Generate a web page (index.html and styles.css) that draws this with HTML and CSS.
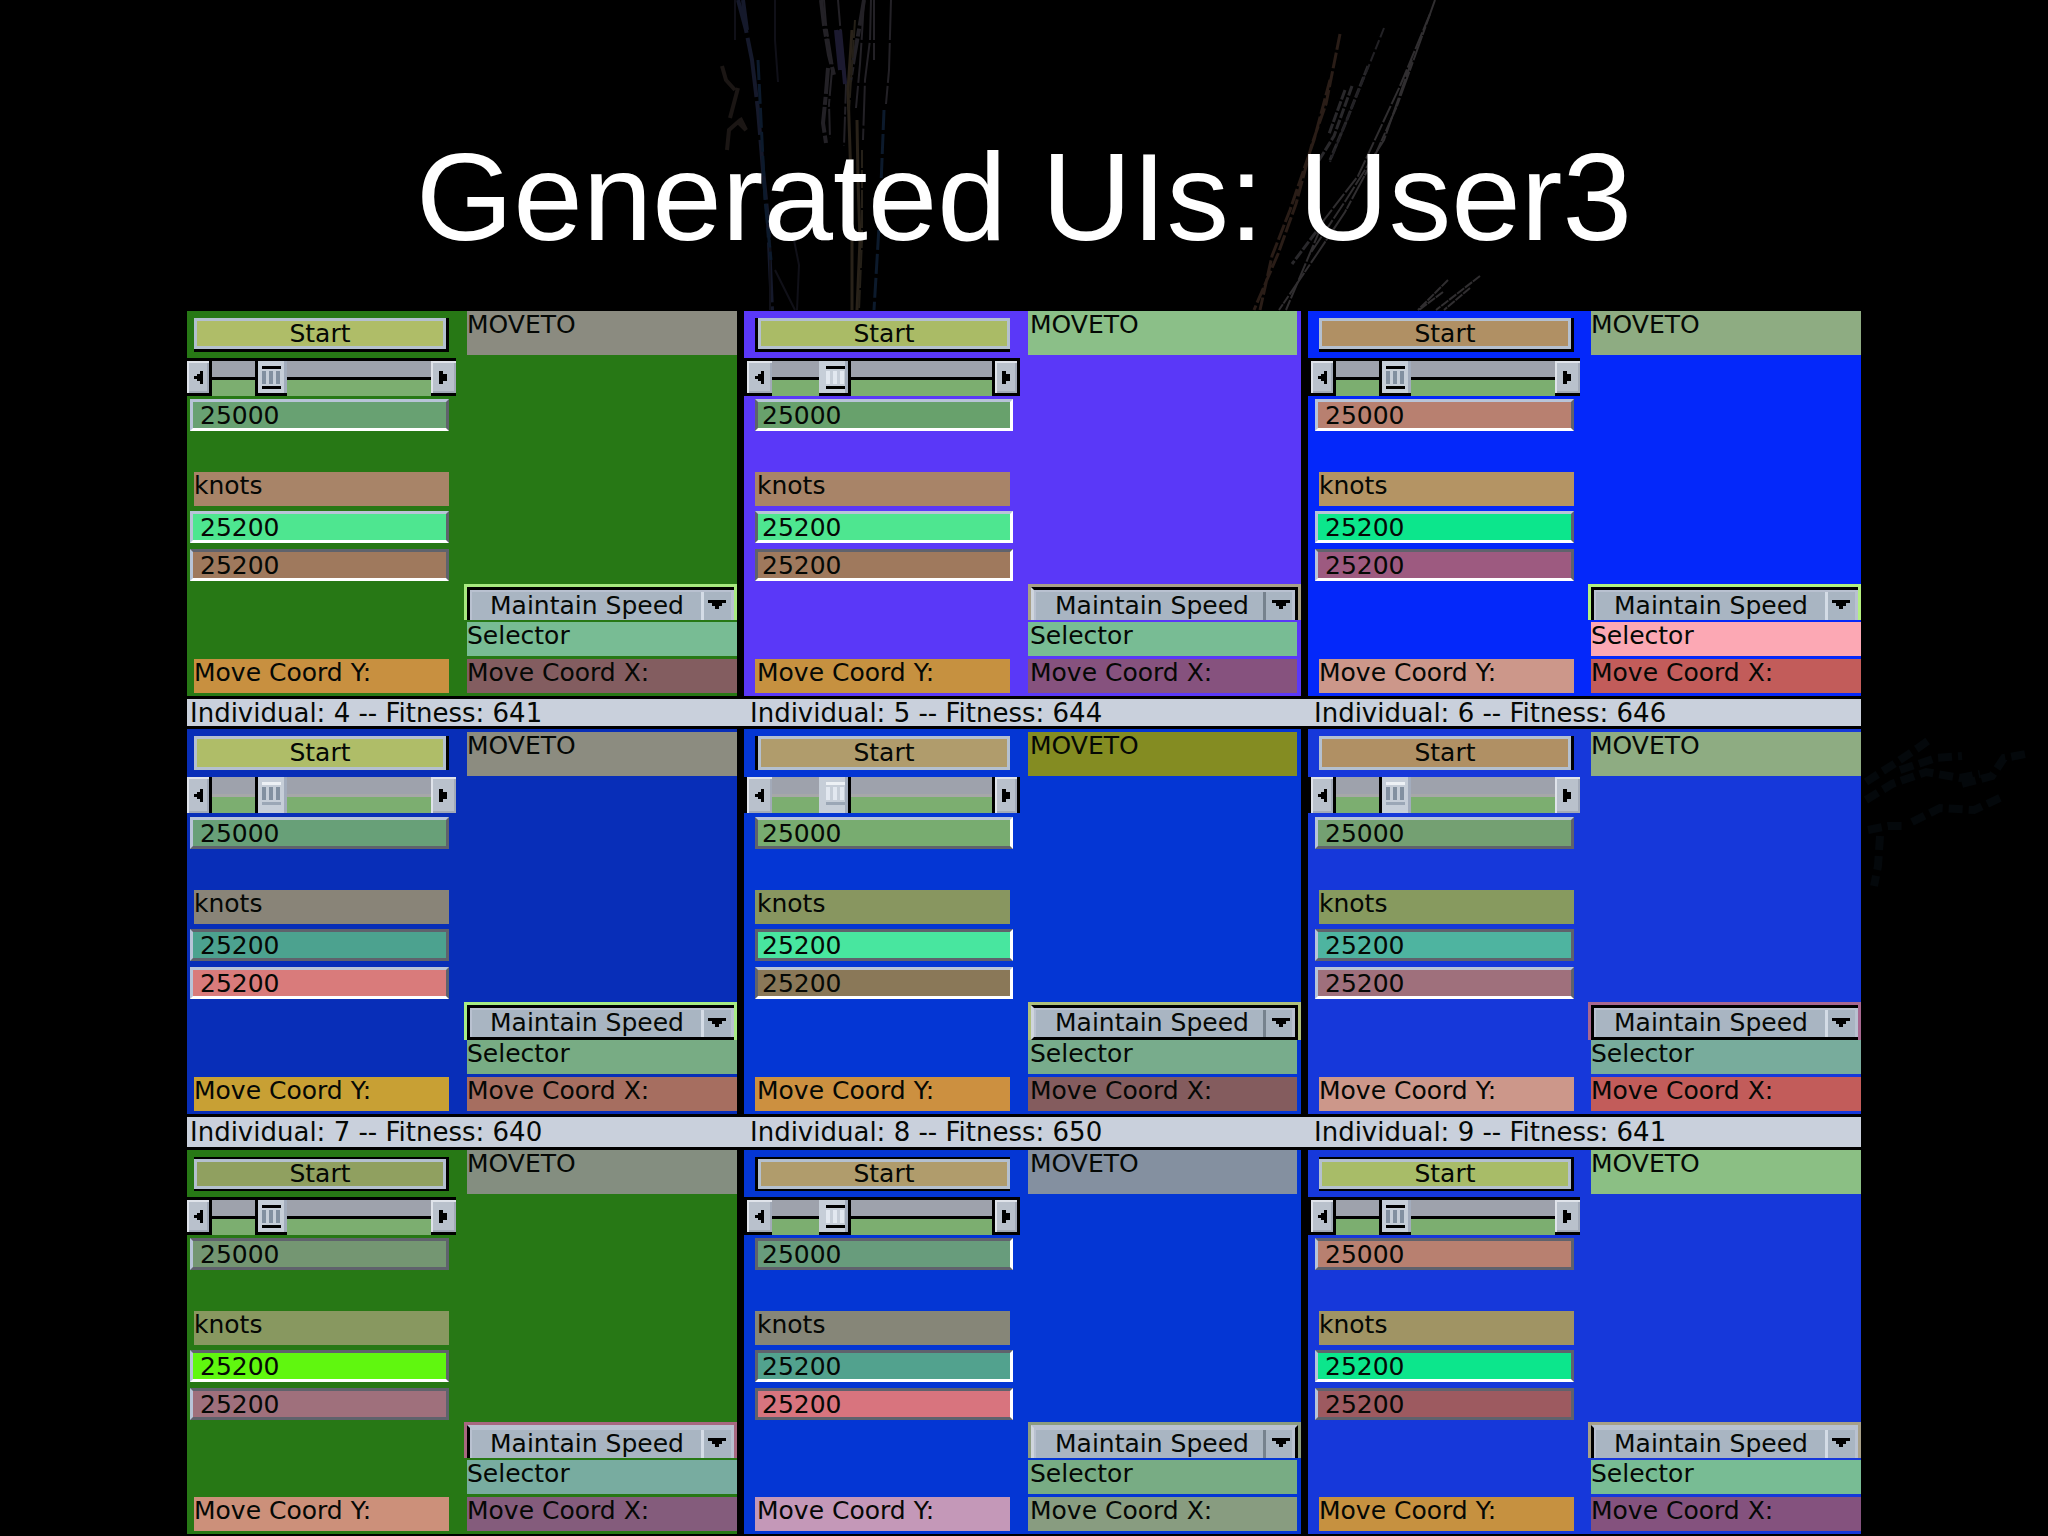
FILE: index.html
```
<!DOCTYPE html>
<html lang="en">

<head>
    <meta charset="UTF-8">
    <meta name="viewport" content="width=device-width, initial-scale=1.0">
    <title>Generated UIs: User3</title>

    <link rel="stylesheet" href="styles.css">
</head>

<body>
    <!-- shared arrows -->
    <svg class="symbols" aria-hidden="true">
        <symbol id="arrow-left" viewBox="0 0 9 13">
            <path d="M6 0h3v13H6v-3H3V8H0V5h3V3h3z" />
        </symbol>
        <symbol id="arrow-right" viewBox="0 0 9 13">
            <path d="M0 0h4v3h4v7H4v3H0z" />
        </symbol>
        <symbol id="arrow-down" viewBox="0 0 18 9">
            <path d="M0 0h18v3h-4v3h-3v3H7V6H4V3H0z" />
        </symbol>
    </svg>

    <!-- faint light trails behind the slide -->
    <svg class="trails" viewBox="0 0 2048 1536" preserveAspectRatio="xMidYMin slice" aria-hidden="true">
        <g fill="none" stroke-width="2">
            <g stroke="#15192b">
                <path stroke-width="4" stroke-dasharray="34 5 60 4" d="M738 0l8 30 6 30 6 50 5 60 5 50 4 90M743 0l4 30" />
                <path stroke="#101018" d="M735 0v40M775 0v40l3 42M793 235l6 30-2 45M770 240v70M775 270l20 40" />
                <path stroke="#0c1a2c" stroke-width="3" stroke-dasharray="20 4" d="M758 60l3 60 4 80 6 60M884 110l-4 100-6 100" />
            </g>
            <g stroke="#232126">
                <path stroke-width="4" stroke-dasharray="26 3 8 2" d="M821 0l3 25 5 30 5 20M828 68l-2 25-3 30 3 20M864 0l-4 24-6 34-4 24" />
                <path stroke-dasharray="26 3 8 2" d="M824 0l2 24 8 50M832 70l-3 34 1 34M838 0l3 36 5 50-2 60" />
                <path stroke-dasharray="40 3" d="M871 0l-1 40-5 40-2 60M864 0l-2 34-2 30-4 44M891 0l-2 70-3 34M874 0v60" />
                <path stroke="#1c1a30" stroke-width="4" d="M840 30l5 54M836 30l4 40" />
            </g>
            <g stroke="#292219">
                <path stroke-width="3" d="M852 30l-4 60 2 60 2 70v90M857 120l1 60 2 60-3 70" />
                <path stroke="#252018" stroke-dasharray="18 2" d="M855 20l-6 90M862 150v90l-3 70" />
            </g>
            <path stroke="#1b1614" stroke-width="4" d="M722 66l4 14 9 10M738 88l-8 30M740 118l6 12-8-8-9 8-2 20" />
            <g stroke="#302e30">
                <path stroke-dasharray="26 2 9 1" d="M1435 0l-20 56-18 50-24 54-28 52-28 42-38 56" />
                <path stroke-dasharray="18 2" d="M1430 14l-30 72-42 90-34 44-38 90M1412 60l-28 80-38 60-36 54" />
                <path stroke="#29282b" stroke-width="3" stroke-dasharray="10 2" d="M1368 66l-22 56-16 38M1352 86l-18 50-16 26M1345 90l-16 44M1316 232l-24 32" />
                <path stroke="#222125" stroke-dasharray="10 3" d="M1384 28l-16 40-18 44-20 50" />
                <path stroke="#2a1d17" stroke-width="3" stroke-dasharray="16 3" d="M1340 34l-6 30-8 40-14 40-16 60-18 50-24 56M1330 80l-16 60-24 70-18 46-12 54" />
                <path stroke-dasharray="9 1" d="M1448 280l-30 30M1443 292l-24 18M1480 276l-44 34M1470 288l-26 22" />
            </g>
            <g stroke="#04080b" stroke-width="8" stroke-dasharray="14 6">
                <path d="M1866 782l28-18 24-16 14-10M1900 770l36-12 26-2" />
                <path d="M1866 800l26-16 34-12 34 6 20-4M1962 784l30-8 12-18 22-4M1912 822l28-14 34 2 30-14" />
                <path d="M1868 830l20-4 16 0M1880 836l-2 30-4 20" />
            </g>
        </g>
    </svg>

    <main class="slide">
        <h1>Generated UIs: User3</h1>

        <div class="board">
            <section class="row row-first">
                <div class="panel side-left individual-1">
                    <div class="controls">
                        <button class="start" type="button">Start</button>
                        <div class="slider">
                            <button type="button" aria-label="Decrease"><svg><use href="#arrow-left" /></svg></button>
                            <input type="range" min="0" max="100" value="23" aria-label="Speed">
                            <button type="button" aria-label="Increase"><svg><use href="#arrow-right" /></svg></button>
                        </div>
                        <input class="field speed" id="speed-1" type="text" value="25000">
                        <label class="tag units" for="speed-1">knots</label>
                        <input class="field coord-a" type="text" value="25200" id="y-1">
                        <input class="field coord-b top-dark" type="text" value="25200" id="x-1">
                        <label class="tag move-y" for="y-1">Move Coord Y:</label>
                    </div>
                    <div class="options">
                        <div class="tag moveto">MOVETO</div>
                        <div class="combo">
                            <select id="mode-1"><option>Maintain Speed</option></select>
                            <svg><use href="#arrow-down" /></svg>
                        </div>
                        <label class="tag selector" for="mode-1">Selector</label>
                        <label class="tag move-x" for="x-1">Move Coord X:</label>
                    </div>
                </div>

                <div class="panel side-right individual-2">
                    <div class="controls">
                        <button class="start" type="button">Start</button>
                        <div class="slider">
                            <button type="button" aria-label="Decrease"><svg><use href="#arrow-left" /></svg></button>
                            <input type="range" min="0" max="100" value="25" aria-label="Speed">
                            <button type="button" aria-label="Increase"><svg><use href="#arrow-right" /></svg></button>
                        </div>
                        <input class="field speed" id="speed-2" type="text" value="25000">
                        <label class="tag units" for="speed-2">knots</label>
                        <input class="field coord-a" type="text" value="25200" id="y-2">
                        <input class="field coord-b top-dark" type="text" value="25200" id="x-2">
                        <label class="tag move-y" for="y-2">Move Coord Y:</label>
                    </div>
                    <div class="options">
                        <div class="tag moveto">MOVETO</div>
                        <div class="combo">
                            <select id="mode-2"><option>Maintain Speed</option></select>
                            <svg><use href="#arrow-down" /></svg>
                        </div>
                        <label class="tag selector" for="mode-2">Selector</label>
                        <label class="tag move-x" for="x-2">Move Coord X:</label>
                    </div>
                </div>

                <div class="panel side-left last individual-3">
                    <div class="controls">
                        <button class="start" type="button">Start</button>
                        <div class="slider">
                            <button type="button" aria-label="Decrease"><svg><use href="#arrow-left" /></svg></button>
                            <input type="range" min="0" max="100" value="23" aria-label="Speed">
                            <button type="button" aria-label="Increase"><svg><use href="#arrow-right" /></svg></button>
                        </div>
                        <input class="field speed" id="speed-3" type="text" value="25000">
                        <label class="tag units" for="speed-3">knots</label>
                        <input class="field coord-a" type="text" value="25200" id="y-3">
                        <input class="field coord-b top-dark" type="text" value="25200" id="x-3">
                        <label class="tag move-y" for="y-3">Move Coord Y:</label>
                    </div>
                    <div class="options">
                        <div class="tag moveto">MOVETO</div>
                        <div class="combo">
                            <select id="mode-3"><option>Maintain Speed</option></select>
                            <svg><use href="#arrow-down" /></svg>
                        </div>
                        <label class="tag selector" for="mode-3">Selector</label>
                        <label class="tag move-x" for="x-3">Move Coord X:</label>
                    </div>
                </div>
            </section>

            <div class="captions">
                <p>Individual: 4 -- Fitness: 641</p>
                <p>Individual: 5 -- Fitness: 644</p>
                <p>Individual: 6 -- Fitness: 646</p>
            </div>

            <section class="row row-middle">
                <div class="panel side-left individual-4">
                    <div class="controls">
                        <button class="start" type="button">Start</button>
                        <div class="slider">
                            <button type="button" aria-label="Decrease"><svg><use href="#arrow-left" /></svg></button>
                            <input type="range" min="0" max="100" value="23" aria-label="Speed">
                            <button type="button" aria-label="Increase"><svg><use href="#arrow-right" /></svg></button>
                        </div>
                        <input class="field speed bottom-dark" id="speed-4" type="text" value="25000">
                        <label class="tag units" for="speed-4">knots</label>
                        <input class="field coord-a top-dark bottom-dark" type="text" value="25200" id="y-4">
                        <input class="field coord-b" type="text" value="25200" id="x-4">
                        <label class="tag move-y" for="y-4">Move Coord Y:</label>
                    </div>
                    <div class="options">
                        <div class="tag moveto">MOVETO</div>
                        <div class="combo">
                            <select id="mode-4"><option>Maintain Speed</option></select>
                            <svg><use href="#arrow-down" /></svg>
                        </div>
                        <label class="tag selector" for="mode-4">Selector</label>
                        <label class="tag move-x" for="x-4">Move Coord X:</label>
                    </div>
                </div>

                <div class="panel side-right individual-5">
                    <div class="controls">
                        <button class="start" type="button">Start</button>
                        <div class="slider">
                            <button type="button" aria-label="Decrease"><svg><use href="#arrow-left" /></svg></button>
                            <input type="range" min="0" max="100" value="25" aria-label="Speed">
                            <button type="button" aria-label="Increase"><svg><use href="#arrow-right" /></svg></button>
                        </div>
                        <input class="field speed bottom-dark" id="speed-5" type="text" value="25000">
                        <label class="tag units" for="speed-5">knots</label>
                        <input class="field coord-a top-dark bottom-dark" type="text" value="25200" id="y-5">
                        <input class="field coord-b" type="text" value="25200" id="x-5">
                        <label class="tag move-y" for="y-5">Move Coord Y:</label>
                    </div>
                    <div class="options">
                        <div class="tag moveto">MOVETO</div>
                        <div class="combo">
                            <select id="mode-5"><option>Maintain Speed</option></select>
                            <svg><use href="#arrow-down" /></svg>
                        </div>
                        <label class="tag selector" for="mode-5">Selector</label>
                        <label class="tag move-x" for="x-5">Move Coord X:</label>
                    </div>
                </div>

                <div class="panel side-left last individual-6">
                    <div class="controls">
                        <button class="start" type="button">Start</button>
                        <div class="slider">
                            <button type="button" aria-label="Decrease"><svg><use href="#arrow-left" /></svg></button>
                            <input type="range" min="0" max="100" value="23" aria-label="Speed">
                            <button type="button" aria-label="Increase"><svg><use href="#arrow-right" /></svg></button>
                        </div>
                        <input class="field speed bottom-dark" id="speed-6" type="text" value="25000">
                        <label class="tag units" for="speed-6">knots</label>
                        <input class="field coord-a top-dark bottom-dark" type="text" value="25200" id="y-6">
                        <input class="field coord-b" type="text" value="25200" id="x-6">
                        <label class="tag move-y" for="y-6">Move Coord Y:</label>
                    </div>
                    <div class="options">
                        <div class="tag moveto">MOVETO</div>
                        <div class="combo">
                            <select id="mode-6"><option>Maintain Speed</option></select>
                            <svg><use href="#arrow-down" /></svg>
                        </div>
                        <label class="tag selector" for="mode-6">Selector</label>
                        <label class="tag move-x" for="x-6">Move Coord X:</label>
                    </div>
                </div>
            </section>

            <div class="captions tall">
                <p>Individual: 7 -- Fitness: 640</p>
                <p>Individual: 8 -- Fitness: 650</p>
                <p>Individual: 9 -- Fitness: 641</p>
            </div>

            <section class="row row-last">
                <div class="panel side-left individual-7">
                    <div class="controls">
                        <button class="start" type="button">Start</button>
                        <div class="slider">
                            <button type="button" aria-label="Decrease"><svg><use href="#arrow-left" /></svg></button>
                            <input type="range" min="0" max="100" value="23" aria-label="Speed">
                            <button type="button" aria-label="Increase"><svg><use href="#arrow-right" /></svg></button>
                        </div>
                        <input class="field speed top-dark bottom-dark" id="speed-7" type="text" value="25000">
                        <label class="tag units" for="speed-7">knots</label>
                        <input class="field coord-a top-dark" type="text" value="25200" id="y-7">
                        <input class="field coord-b top-dark bottom-dark" type="text" value="25200" id="x-7">
                        <label class="tag move-y" for="y-7">Move Coord Y:</label>
                    </div>
                    <div class="options">
                        <div class="tag moveto">MOVETO</div>
                        <div class="combo">
                            <select id="mode-7"><option>Maintain Speed</option></select>
                            <svg><use href="#arrow-down" /></svg>
                        </div>
                        <label class="tag selector" for="mode-7">Selector</label>
                        <label class="tag move-x" for="x-7">Move Coord X:</label>
                    </div>
                </div>

                <div class="panel side-right individual-8">
                    <div class="controls">
                        <button class="start" type="button">Start</button>
                        <div class="slider">
                            <button type="button" aria-label="Decrease"><svg><use href="#arrow-left" /></svg></button>
                            <input type="range" min="0" max="100" value="25" aria-label="Speed">
                            <button type="button" aria-label="Increase"><svg><use href="#arrow-right" /></svg></button>
                        </div>
                        <input class="field speed top-dark bottom-dark" id="speed-8" type="text" value="25000">
                        <label class="tag units" for="speed-8">knots</label>
                        <input class="field coord-a top-dark" type="text" value="25200" id="y-8">
                        <input class="field coord-b top-dark bottom-dark" type="text" value="25200" id="x-8">
                        <label class="tag move-y" for="y-8">Move Coord Y:</label>
                    </div>
                    <div class="options">
                        <div class="tag moveto">MOVETO</div>
                        <div class="combo">
                            <select id="mode-8"><option>Maintain Speed</option></select>
                            <svg><use href="#arrow-down" /></svg>
                        </div>
                        <label class="tag selector" for="mode-8">Selector</label>
                        <label class="tag move-x" for="x-8">Move Coord X:</label>
                    </div>
                </div>

                <div class="panel side-left last individual-9">
                    <div class="controls">
                        <button class="start" type="button">Start</button>
                        <div class="slider">
                            <button type="button" aria-label="Decrease"><svg><use href="#arrow-left" /></svg></button>
                            <input type="range" min="0" max="100" value="23" aria-label="Speed">
                            <button type="button" aria-label="Increase"><svg><use href="#arrow-right" /></svg></button>
                        </div>
                        <input class="field speed top-dark bottom-dark" id="speed-9" type="text" value="25000">
                        <label class="tag units" for="speed-9">knots</label>
                        <input class="field coord-a top-dark" type="text" value="25200" id="y-9">
                        <input class="field coord-b top-dark bottom-dark" type="text" value="25200" id="x-9">
                        <label class="tag move-y" for="y-9">Move Coord Y:</label>
                    </div>
                    <div class="options">
                        <div class="tag moveto">MOVETO</div>
                        <div class="combo">
                            <select id="mode-9"><option>Maintain Speed</option></select>
                            <svg><use href="#arrow-down" /></svg>
                        </div>
                        <label class="tag selector" for="mode-9">Selector</label>
                        <label class="tag move-x" for="x-9">Move Coord X:</label>
                    </div>
                </div>
            </section>
        </div>
    </main>
</body>

</html>
```
FILE: styles.css
```
* {
    box-sizing: border-box;
}

body {
    margin: 0;
    background-color: #000;
    color: #050805;
    font-family: "DejaVu Sans", Verdana, sans-serif;
    font-size: 25px;
    position: relative;
}

button,
input,
select {
    margin: 0;
    padding: 0;
    border: 0;
    border-radius: 0;
    color: inherit;
    font: inherit;
    min-width: 0;
    appearance: none;
}

.symbols {
    display: none;
}

.trails {
    position: absolute;
    top: 0;
    left: 0;
    width: 100%;
    height: 100%;
}

.slide {
    position: relative;
    padding: 125px 187px 2px;
}

h1 {
    margin: 0 0 42px;
    color: #fff;
    font-family: "Liberation Sans", Arial, sans-serif;
    font-size: 125px;
    font-weight: normal;
    line-height: 144px;
    text-align: center;
}

/* Board: three rows of panels with a caption bar between them */
.board {
    display: flex;
    flex-direction: column;
    gap: 3px;
}

.row,
.captions {
    display: grid;
    grid-template-columns: 550fr 557fr 553fr;
    column-gap: 7px;
}

.captions {
    min-height: 27px;
    background-color: #c9d0dc;
    align-items: center;
    font-size: 26px;
}

.captions.tall {
    min-height: 30px;
}

.captions p {
    margin: 0;
    padding-left: 3px;
    line-height: 24px;
}

.captions p + p {
    padding-left: 6px;
}

/* Panel */
.panel {
    --before: 3px;
    --after: 7px;
    --light: #b8c4d8;
    --dark: #5f626c;
    display: grid;
    grid-template-columns: 269fr 273fr;
    column-gap: 8px;
    min-height: 385px;
    background-color: var(--bg);
}

.panel.last {
    --before: 7px;
    --after: 6px;
    grid-template-columns: 272fr 273fr;
}

.panel.side-right {
    --before: 11px;
    --after: 7px;
    grid-template-columns: 276fr 273fr;
}

.row-last .panel {
    min-height: 384px;
}

.controls,
.options {
    display: flex;
    flex-direction: column;
    min-width: 0;
    padding-bottom: 3px;
}

.controls {
    padding-top: 7px;
}

.tag {
    min-height: 34px;
    line-height: 28px;
    white-space: nowrap;
}

.controls .tag,
.start {
    margin-left: calc(var(--before) + 4px);
    margin-right: var(--after);
}

.side-right .controls .tag,
.side-right .start {
    margin-left: var(--before);
    margin-right: 10px;
}

.options .tag {
    margin-left: 3px;
}

.side-right .options .tag {
    margin-left: 0;
    margin-right: 4px;
}

.side-right .tag {
    padding-left: 2px;
}

/* Start button */
.start {
    height: 34px;
    border: 0 solid #000;
    border-right-width: 3px;
    border-bottom-width: 3px;
    background-color: var(--start);
    box-shadow: inset 0 0 0 3px #b4c0cf;
    line-height: 30px;
}

.side-right .start {
    border-left-width: 3px;
    border-right-width: 0;
}

.row-middle .start {
    border-bottom-width: 0;
}

.row-last .start {
    border-top-width: 2px;
    border-bottom-width: 2px;
}

/* Slider */
.slider {
    display: flex;
    height: 38px;
    margin: 6px 0 3px;
    background-color: #000;
    border-top: 3px solid #000;
}

.slider button {
    flex: none;
    display: flex;
    align-items: center;
    justify-content: center;
    width: 25px;
    background-color: #b9c1cc;
    border-bottom: 3px solid #000;
    box-shadow: inset 2px 2px #dfe3ea, inset -2px -2px #a2aab8;
}

.slider button:first-child {
    border-right: 3px solid #000;
}

.side-right .slider button:first-child {
    border-right: 0;
}

.side-right .slider button:last-child {
    border-left: 3px solid #000;
}

.side-right .slider,
.last .slider {
    border-left: 3px solid #000;
}

.side-right .slider {
    border-right: 3px solid #000;
}

.slider svg {
    width: 9px;
    height: 13px;
    shape-rendering: crispEdges;
}

.slider input {
    --grip: #8290a0;
    --grip-top: #000;
    --grip-bottom: #000;
    flex: 1;
    height: 35px;
    background: linear-gradient(#9ea2ac 16px, #000 16px, #000 19px, #7cae70 19px);
}

.side-right .slider input {
    --grip: #e2e8f0;
}

.slider input::-webkit-slider-thumb {
    appearance: none;
    width: 32px;
    height: 35px;
    border: 0 solid #000;
    border-left-width: 3px;
    border-bottom-width: 3px;
    background:
        linear-gradient(var(--grip-top), var(--grip-top)) 4px 5px / 19px 3px no-repeat,
        linear-gradient(var(--grip-bottom), var(--grip-bottom)) 4px 25px / 19px 3px no-repeat,
        linear-gradient(var(--grip), var(--grip)) 4px 10px / 4px 13px no-repeat,
        linear-gradient(var(--grip), var(--grip)) 11px 10px / 4px 13px no-repeat,
        linear-gradient(var(--grip), var(--grip)) 18px 10px / 4px 13px no-repeat,
        linear-gradient(90deg, #c6ced8 26px, #a2acbc 26px);
}

.side-right .slider input::-webkit-slider-thumb {
    border-left-width: 0;
    border-right-width: 3px;
    background-position: 7px 5px, 7px 25px, 7px 10px, 14px 10px, 21px 10px, 0 0;
}

.row-middle .slider {
    height: 36px;
    margin: 7px 0 4px;
    border-top: 0;
}

.row-middle .slider button {
    border-bottom: 0;
}

.row-middle .slider input {
    --grip-top: #edf1f5;
    --grip-bottom: #9ba7b6;
    height: 36px;
    background: linear-gradient(#9ea2ac 17px, #a6a8a8 17px, #a6a8a8 20px, #7cae70 20px);
}

.row-middle .slider input::-webkit-slider-thumb {
    height: 36px;
    border-bottom-width: 0;
}

/* Text fields */
.field {
    width: auto;
    height: 32px;
    margin-left: var(--before);
    margin-right: var(--after);
    padding-left: 7px;
    border: 3px solid;
    border-color: var(--light) var(--dark) #fff var(--light);
}

.side-right .field {
    padding-left: 4px;
    border-color: var(--light) #fff #fff var(--dark);
}

.panel .top-dark {
    border-top-color: var(--dark);
}

.panel .bottom-dark {
    border-bottom-color: var(--dark);
}

.speed {
    background-color: var(--speed);
}

.units {
    margin-top: 41px;
    background-color: var(--units);
}

.coord-a {
    margin-top: 5px;
    background-color: var(--coord-a);
}

.coord-b {
    margin-top: 6px;
    background-color: var(--coord-b);
}

.move-y {
    margin-top: auto;
    background-color: var(--move-y);
}

/* Right column */
.moveto {
    min-height: 44px;
    background-color: var(--moveto);
}

.row-middle .moveto {
    margin-top: 3px;
}

.combo {
    position: relative;
    display: flex;
    height: 36px;
    margin-top: auto;
    margin-bottom: 2px;
    border: 3px solid var(--combo);
    border-bottom: 0;
}

.combo select {
    flex: 1;
    padding-left: 20px;
    border: 0 solid #000;
    border-top-width: 3px;
    border-left-width: 3px;
    background: linear-gradient(#d4dce6, #d4dce6) right 30px top / 3px 100% no-repeat #a9b5c2;
    box-shadow: inset 2px 2px #b9c1d0, inset -3px 0 #b9c1d0;
}

.side-right .combo select {
    border-left: 3px solid #cfd5dd;
    border-right-width: 3px;
    background: linear-gradient(#76828e, #76828e) right 29px top / 3px 100% no-repeat #a9b5c2;
    padding-left: 21px;
}

.row-middle .combo {
    height: 38px;
    margin-bottom: 0;
}

.row-middle .combo select {
    border-bottom-width: 3px;
}

.row-last .combo select {
    border-top-color: #b9c1d0;
}

.combo svg {
    position: absolute;
    right: 8px;
    top: 13px;
    width: 18px;
    height: 9px;
    shape-rendering: crispEdges;
    pointer-events: none;
}

.selector {
    margin-bottom: 3px;
    background-color: var(--selector);
}

.move-x {
    background-color: var(--move-x);
}

/* Colours of each individual */
.individual-1 {
    --bg: #277815;
    --start: #afbd68;
    --moveto: #8b8b80;
    --speed: #68a172;
    --units: #a88468;
    --coord-a: #4ee690;
    --coord-b: #9f795d;
    --combo: #a8ea80;
    --selector: #78bc94;
    --move-y: #c89040;
    --move-x: #835d60;
}

.individual-2 {
    --bg: #5a38f8;
    --start: #aabb66;
    --moveto: #8bbf88;
    --speed: #68a16c;
    --units: #a88468;
    --coord-a: #4ee690;
    --coord-b: #9f795d;
    --combo: #a8a088;
    --selector: #78bc94;
    --move-y: #c69140;
    --move-x: #86527e;
}

.individual-3 {
    --bg: #0428fa;
    --start: #b09064;
    --moveto: #8eac82;
    --speed: #b88070;
    --units: #b49464;
    --coord-a: #0ce68c;
    --coord-b: #9d5a80;
    --combo: #b4f080;
    --selector: #fca8b4;
    --move-y: #cc978a;
    --move-x: #c25c5a;
}

.individual-4 {
    --bg: #082eb8;
    --start: #afbd68;
    --moveto: #8c8c80;
    --speed: #68a078;
    --units: #898478;
    --coord-a: #4ca28f;
    --coord-b: #d97b7b;
    --combo: #a8ec84;
    --selector: #78ac84;
    --move-y: #c8a034;
    --move-x: #a66e60;
}

.individual-5 {
    --bg: #0436d4;
    --start: #b09c6c;
    --moveto: #848c22;
    --speed: #78ac70;
    --units: #889660;
    --coord-a: #48e69f;
    --coord-b: #8a7858;
    --combo: #b0c07c;
    --selector: #78ac8c;
    --move-y: #cc9040;
    --move-x: #845c5e;
}

.individual-6 {
    --bg: #1638da;
    --start: #b09064;
    --moveto: #8eac82;
    --speed: #74a072;
    --units: #879a5f;
    --coord-a: #4eb4a0;
    --coord-b: #9f707c;
    --combo: #a86890;
    --selector: #78ac9c;
    --move-y: #cc978a;
    --move-x: #c25c5a;
}

.individual-7 {
    --bg: #277815;
    --start: #90a060;
    --moveto: #848e80;
    --speed: #749672;
    --units: #889860;
    --coord-a: #60f70f;
    --coord-b: #9f707c;
    --combo: #a86880;
    --selector: #78aca0;
    --move-y: #cc907a;
    --move-x: #845c7c;
}

.individual-8 {
    --bg: #0436d4;
    --start: #b09c6c;
    --moveto: #8490a0;
    --speed: #689c7c;
    --units: #868678;
    --coord-a: #52a28e;
    --coord-b: #d8747e;
    --combo: #8c9c80;
    --selector: #78ac84;
    --move-y: #c498b8;
    --move-x: #889c80;
}

.individual-9 {
    --bg: #1638da;
    --start: #a8bc68;
    --moveto: #8bbf84;
    --speed: #b88070;
    --units: #a09464;
    --coord-a: #0ce68c;
    --coord-b: #9d5a60;
    --combo: #a8a088;
    --selector: #78bc94;
    --move-y: #c69140;
    --move-x: #84527e;
}
```
